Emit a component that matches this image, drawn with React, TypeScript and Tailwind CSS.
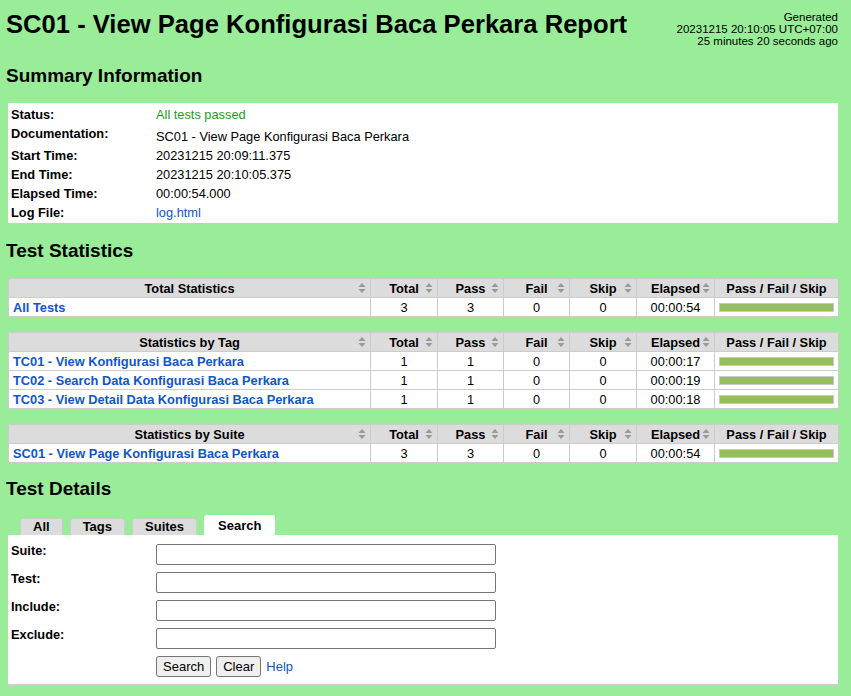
import React from 'react';

const statCols = ['Total', 'Pass', 'Fail', 'Skip', 'Elapsed'];

type StatRow = {
  name: string;
  total: number;
  pass: number;
  fail: number;
  skip: number;
  elapsed: string;
};

const totalRows: StatRow[] = [
  { name: 'All Tests', total: 3, pass: 3, fail: 0, skip: 0, elapsed: '00:00:54' },
];

const tagRows: StatRow[] = [
  { name: 'TC01 - View Konfigurasi Baca Perkara', total: 1, pass: 1, fail: 0, skip: 0, elapsed: '00:00:17' },
  { name: 'TC02 - Search Data Konfigurasi Baca Perkara', total: 1, pass: 1, fail: 0, skip: 0, elapsed: '00:00:19' },
  { name: 'TC03 - View Detail Data Konfigurasi Baca Perkara', total: 1, pass: 1, fail: 0, skip: 0, elapsed: '00:00:18' },
];

const suiteRows: StatRow[] = [
  { name: 'SC01 - View Page Konfigurasi Baca Perkara', total: 3, pass: 3, fail: 0, skip: 0, elapsed: '00:00:54' },
];

// little up/down arrows for sortable headers
const SortIcon = () => (
  <svg width="8" height="11" viewBox="0 0 8 11" className="absolute right-[4px] top-1/2 -translate-y-1/2">
    <path d="M4 0.5 L7.5 4.5 H0.5 Z" fill="#9a9a9a" />
    <path d="M4 10.5 L7.5 6.5 H0.5 Z" fill="#9a9a9a" />
  </svg>
);

const StatTable = ({ title, rows }: { title: string; rows: StatRow[] }) => (
  <table className="w-[830px] border-collapse bg-white table-fixed text-[12.8px] leading-[15px]">
    <colgroup>
      <col className="w-[362px]" />
      <col className="w-[67px]" />
      <col className="w-[66px]" />
      <col className="w-[66px]" />
      <col className="w-[67px]" />
      <col className="w-[78px]" />
      <col className="w-[124px]" />
    </colgroup>
    <thead>
      <tr className="bg-[#dcdcdc]">
        <th className="relative h-[19px] border border-[#cccccc] p-0 text-center font-bold">
          {title}
          <SortIcon />
        </th>
        {statCols.map((c) => (
          <th key={c} className="relative h-[19px] border border-[#cccccc] p-0 text-center font-bold">
            {c}
            <SortIcon />
          </th>
        ))}
        <th className="h-[19px] border border-[#cccccc] p-0 text-center font-bold">Pass / Fail / Skip</th>
      </tr>
    </thead>
    <tbody>
      {rows.map((r) => (
        <tr key={r.name}>
          <td className="h-[19px] border border-[#cccccc] px-[4px] py-0 font-bold text-[#1155cc]">{r.name}</td>
          <td className="h-[19px] border border-[#cccccc] p-0 text-center">{r.total}</td>
          <td className="h-[19px] border border-[#cccccc] p-0 text-center">{r.pass}</td>
          <td className="h-[19px] border border-[#cccccc] p-0 text-center">{r.fail}</td>
          <td className="h-[19px] border border-[#cccccc] p-0 text-center">{r.skip}</td>
          <td className="h-[19px] border border-[#cccccc] p-0 text-center">{r.elapsed}</td>
          <td className="h-[19px] border border-[#cccccc] px-[4px] py-0">
            <div className="h-[9px] border border-[#c8c8c8] bg-[#97bd61]" />
          </td>
        </tr>
      ))}
    </tbody>
  </table>
);

const summary = [
  { label: 'Status:', value: 'All tests passed', cls: 'text-[#1f9a1f]', h: 'h-[19px]' },
  { label: 'Documentation:', value: 'SC01 - View Page Konfigurasi Baca Perkara', cls: 'text-black pt-[3px]', h: 'h-[22px]' },
  { label: 'Start Time:', value: '20231215 20:09:11.375', cls: 'text-black', h: 'h-[19px]' },
  { label: 'End Time:', value: '20231215 20:10:05.375', cls: 'text-black', h: 'h-[19px]' },
  { label: 'Elapsed Time:', value: '00:00:54.000', cls: 'text-black', h: 'h-[19px]' },
  { label: 'Log File:', value: 'log.html', cls: 'text-[#1155cc]', h: 'h-[19px]' },
];

const tabs = ['All', 'Tags', 'Suites'];

const fields = ['Suite:', 'Test:', 'Include:', 'Exclude:'];

export default function App() {
  return (
    <div className="min-h-[696px] w-[851px] bg-[#99ed99] pl-[8px] pr-[13px] text-black font-['Liberation_Sans',Arial,sans-serif] text-[12.8px]">
      <div className="flex items-start justify-between pt-[8px]">
        <h1 className="-ml-[2px] text-[25.6px] font-bold leading-[32px]">SC01 - View Page Konfigurasi Baca Perkara Report</h1>
        <div className="pt-[3px] text-right text-[11.5px] leading-[12px]">
          <div>Generated</div>
          <div>20231215 20:10:05 UTC+07:00</div>
          <div>25 minutes 20 seconds ago</div>
        </div>
      </div>

      <h2 className="-ml-[2px] mt-[18px] text-[19px] font-bold leading-[22px]">Summary Information</h2>
      <div className="mt-[16px] bg-white px-[3px] pb-[1px] pt-[2px]">
        {summary.map((s) => (
          <div key={s.label} className={`flex ${s.h}`}>
            <div className="w-[145px] font-bold leading-[19px]">{s.label}</div>
            <div className={`leading-[19px] ${s.cls}`}>{s.value}</div>
          </div>
        ))}
      </div>

      <h2 className="-ml-[2px] mt-[17px] text-[19px] font-bold leading-[22px]">Test Statistics</h2>
      <div className="mt-[16px] flex flex-col gap-[15px]">
        <StatTable title="Total Statistics" rows={totalRows} />
        <StatTable title="Statistics by Tag" rows={tagRows} />
        <StatTable title="Statistics by Suite" rows={suiteRows} />
      </div>

      <h2 className="-ml-[2px] mt-[15px] text-[19px] font-bold leading-[22px]">Test Details</h2>
      <div className="mt-[15px] flex items-end gap-[7px] pl-[12px]">
        {tabs.map((t) => (
          <div
            key={t}
            className="h-[17px] rounded-t-[3px] border border-b-0 border-[#cccccc] bg-[#dcdcdc] px-[12px] text-[13px] font-bold leading-[16px]"
          >
            {t}
          </div>
        ))}
        <div className="h-[20px] rounded-t-[3px] bg-white px-[14px] text-[13px] font-bold leading-[22px]">Search</div>
      </div>
      <div className="border-b-[2px] border-[#cccccc] bg-white pb-[7px] pl-[3px] pt-[9px]">
        {fields.map((f) => (
          <div key={f} className="flex h-[28px]">
            <div className="w-[145px] font-bold leading-[14px]">{f}</div>
            <input
              type="text"
              className="h-[21px] w-[340px] rounded-[2px] border border-[#767676] bg-white outline-none"
            />
          </div>
        ))}
        <div className="flex items-center gap-[5px] pl-[145px]">
          <button className="h-[21px] rounded-[3px] border border-[#767676] bg-[#efefef] px-[6px] text-[13px] leading-[18px]">Search</button>
          <button className="h-[21px] rounded-[3px] border border-[#767676] bg-[#efefef] px-[6px] text-[13px] leading-[18px]">Clear</button>
          <span className="text-[13px] text-[#1155cc]">Help</span>
        </div>
      </div>
    </div>
  );
}
